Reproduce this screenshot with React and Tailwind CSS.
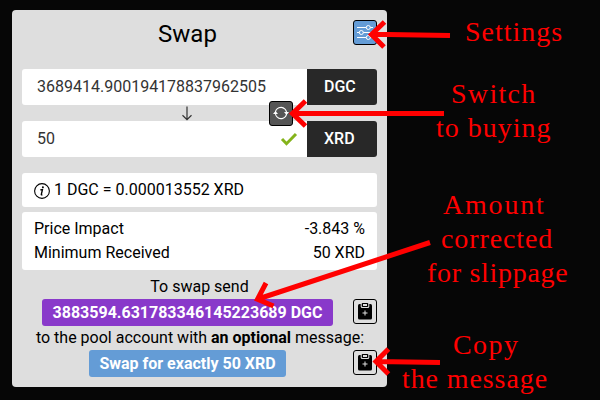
import React from "react";

function SlidersIcon() {
  return (
    <svg width="18" height="17" viewBox="0 0 18 17" fill="none" stroke="white" strokeWidth="1">
      <path d="M1 3.5H10.3M14.3 3.5h2.7M1 8.5H3.3M7.3 8.5H17M1 13.5H10.3M14.3 13.5h2.7" />
      <circle cx="12.3" cy="3.5" r="2" />
      <circle cx="5.3" cy="8.5" r="2" />
      <circle cx="12.3" cy="13.5" r="2" />
    </svg>
  );
}

function RefreshIcon() {
  return (
    <svg className="shrink-0" width="18" height="16" viewBox="0 0 18 16" fill="none" stroke="white" strokeWidth="1.1">
      <path d="M3.4 8A5.6 5.6 0 0 1 13 4.1M14.6 8A5.6 5.6 0 0 1 5 11.9" />
      <path d="M1 9l2.5-3L6 9zM12 7l2.5 3L17 7z" fill="white" stroke="none" />
      <path d="M13 4.1A5.6 5.6 0 0 1 14.5 7M5 11.9A5.6 5.6 0 0 1 3.5 9" />
    </svg>
  );
}

function CopyButton() {
  return (
    <button className="flex h-[25px] w-6 items-center justify-center rounded-[3px] border border-black">
      <svg width="16" height="17" viewBox="0 0 16 17">
        <rect x="1" y="1" width="14" height="15.5" rx="1.5" fill="black" />
        <path d="M3.7 0v3.4q0 1.6 1.6 1.6h5.4q1.6 0 1.6-1.6V0z" fill="#dedede" />
        <rect x="4.7" y="0" width="6.6" height="4" rx="1" fill="black" />
        <rect x="6" y="1" width="4" height="2" fill="#dedede" />
        <path d="M8 7.5v5M5.5 10h5" stroke="#dedede" />
      </svg>
    </button>
  );
}

function AmountRow({ value, token, valid }) {
  return (
    <div className="flex h-9 overflow-hidden rounded-[3px]">
      <div className="flex flex-1 items-center justify-between bg-white pr-[9px] pl-[15px] text-[#333]">
        <span>{value}</span>
        {valid && (
          <svg width="18" height="16" viewBox="0 0 18 16" fill="none" stroke="#84b31b" strokeWidth="3">
            <path d="M2 8l4.5 4.7L16 3" />
          </svg>
        )}
      </div>
      <div className="flex w-[70px] items-center bg-[#282828] pl-[17px] font-medium text-white">{token}</div>
    </div>
  );
}

function SwapCard() {
  return (
    <div className="mt-2.5 ml-3 flex h-[377px] w-[375px] flex-col rounded-[4px] bg-[#dedede] px-2.5 pt-2.5">
      <div className="grid h-[49px] grid-cols-[1fr_24px] items-start">
        <h1 className="text-center text-2xl leading-7">Swap</h1>
        <button className="flex h-[25px] w-6 items-center justify-center rounded-[3px] border border-black bg-[#649cd6]">
          <SlidersIcon />
        </button>
      </div>
      <AmountRow value="3689414.900194178837962505" token="DGC" />
      <div className="relative z-10 flex h-4 items-center">
        <svg className="ml-[159px]" width="12" height="16" viewBox="0 0 12 16" fill="none" stroke="#333" strokeWidth="1.2">
          <path d="M6 1.5v13M1.5 10.3L6 14.6l4.5-4.3" />
        </svg>
        <button className="ml-[76px] flex h-[25px] w-6 shrink-0 items-center justify-center rounded-[3px] border border-black bg-[#555]">
          <RefreshIcon />
        </button>
      </div>
      <AmountRow value="50" token="XRD" valid />
      <div className="mt-4 flex h-[34px] items-center gap-1 rounded-[3px] bg-white px-3">
        <svg className="mt-[2px]" width="16" height="16" viewBox="0 0 16 16">
          <circle cx="8" cy="8" r="7.4" fill="none" stroke="black" strokeWidth="1.1" />
          <circle cx="8.9" cy="4.2" r="1" />
          <path d="M6.3 6.8l2.2-.3-1.2 5c-.1.6.5.4 1.1.1M8.4 6.7l-1.1 4.8" fill="none" stroke="black" strokeWidth="1.3" />
        </svg>
        <span className="leading-6">1 DGC = 0.000013552 XRD</span>
      </div>
      <div className="mt-[5px] flex h-[58px] flex-col justify-center rounded-[3px] bg-white px-3 leading-6">
        <div className="flex justify-between"><span>Price Impact</span><span>-3.843 %</span></div>
        <div className="flex justify-between"><span>Minimum Received</span><span>50 XRD</span></div>
      </div>
      <div className="mt-[5px] flex h-6 justify-center leading-6"><span>To swap send</span></div>
      <div className="grid h-[27px] grid-cols-[331px_24px]">
        <div className="flex items-start justify-center">
          <span className="h-[27px] w-[291px] rounded-[3px] bg-[#8939ca] text-center leading-[27px] font-bold text-white">3883594.631783346145223689 DGC</span>
        </div>
        <CopyButton />
      </div>
      <div className="h-6 pl-px text-center leading-6 whitespace-nowrap">to the pool account with <b>an optional</b> message:</div>
      <div className="grid h-[27px] grid-cols-[331px_24px]">
        <div className="flex items-start justify-center">
          <span className="h-[27px] w-[197px] rounded-[3px] bg-[#649cd6] text-center leading-[27px] font-bold text-white">Swap for exactly 50 XRD</span>
        </div>
        <CopyButton />
      </div>
    </div>
  );
}

function Labels() {
  return (
    <div className="flex w-[213px] flex-col pt-[15px] font-['Liberation_Serif',serif] text-[28px] leading-[34px] whitespace-nowrap text-[#f00]">
      <p className="pl-[78px] tracking-[1px]">Settings</p>
      <p className="mt-7 pl-[64px] tracking-[1.3px]">Switch</p>
      <p className="pl-[49px] tracking-[1px]">to buying</p>
      <p className="mt-[43px] pl-[56px] tracking-[1.8px]">Amount</p>
      <p className="pl-[54px] tracking-[0.9px]">corrected</p>
      <p className="pl-[40px] tracking-[0.7px]">for slippage</p>
      <p className="mt-[38px] pl-[66px] tracking-[1.4px]">Copy</p>
      <p className="pl-[15px] tracking-[0.9px]">the message</p>
    </div>
  );
}

function Arrows() {
  return (
    <svg className="pointer-events-none absolute inset-0 z-20" width="600" height="400" fill="none" stroke="#f00" strokeWidth="5">
      <path d="M450 35.5L372 34.3M384.5 22L371.5 34.5L384 47" />
      <path d="M444 113.5H293M305.5 101L292.5 113.5L305.5 126" />
      <path d="M430 242.5L258 299M266 283L257.5 299.3L273.5 306" />
      <path d="M440 362.5L377 361.5M388.5 349L376 361.5L388.5 374" />
    </svg>
  );
}

export default function App() {
  return (
    <div className="relative flex h-[400px] w-[600px] overflow-hidden bg-[#060606] font-[Roboto,sans-serif] text-base text-black">
      <SwapCard />
      <Labels />
      <Arrows />
    </div>
  );
}
